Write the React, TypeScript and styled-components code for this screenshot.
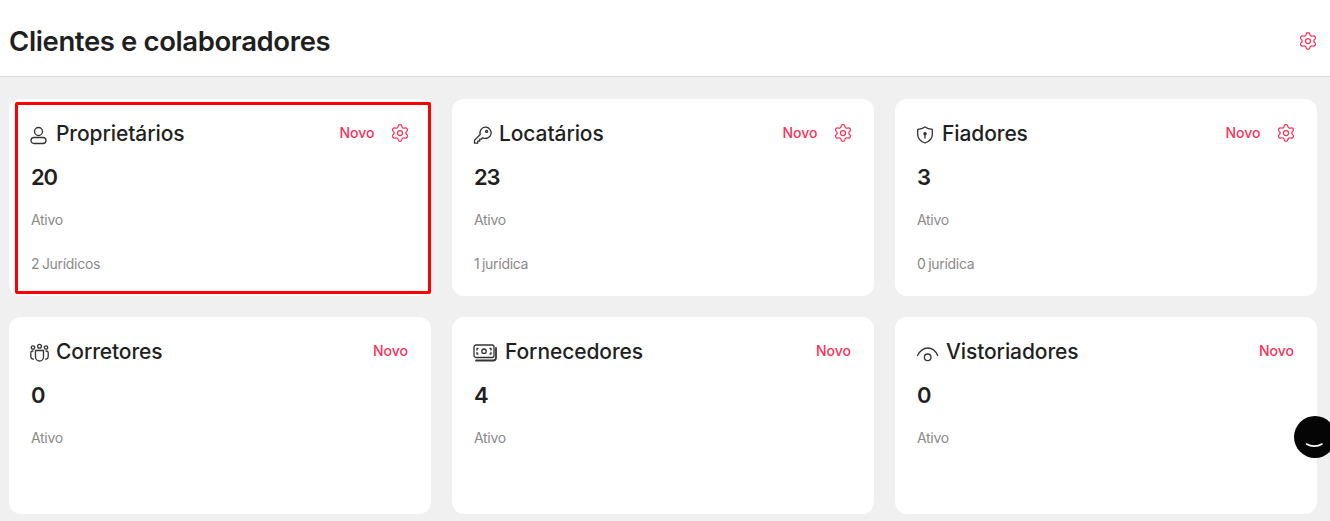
import React from "react";
import styled, { createGlobalStyle } from "styled-components";
import { Settings } from "lucide-react";

const GlobalStyle = createGlobalStyle`
  html, body {
    margin: 0;
    padding: 0;
    height: 100%;
    overflow: hidden;
    background: #f0f0f0;
    font-family: Inter, "Noto Sans", sans-serif;
  }
`;

const Page = styled.div`
  height: 521px;
  overflow: hidden;
`;

const Header = styled.header`
  background: #fff;
  border-bottom: 1px solid #d8d8d8;
  display: flex;
  align-items: center;
  justify-content: space-between;
  padding: 5px 12px 0 9px;
  height: 71px;
`;

const Title = styled.h1`
  margin: 0;
  font-size: 27.5px;
  font-weight: 600;
  letter-spacing: -0.38px;
  color: #1f1f1f;
`;

const Grid = styled.main`
  display: grid;
  grid-template-columns: repeat(3, 1fr);
  grid-auto-rows: 197px;
  gap: 21px;
  padding: 22px 13px 0 9px;
`;

const Card = styled.section`
  position: relative;
  background: #fff;
  border-radius: 12px;
  padding: 22px 22px 0 22px;
`;

const Highlight = styled.div`
  position: absolute;
  left: 6px;
  top: 3px;
  right: 0;
  bottom: 2px;
  border: 3px solid #ff0000;
  border-radius: 2px;
  pointer-events: none;
`;

const CardHead = styled.div`
  display: flex;
  align-items: center;
  height: 24px;
`;

const CardIcon = styled.svg`
  width: 20px;
  height: 20px;
  margin-left: -1px;
  margin-top: 3px;
  margin-right: 6px;
  flex: none;
  fill: none;
  stroke: #333;
  stroke-width: 1.3;
  stroke-linecap: round;
  stroke-linejoin: round;
`;

const CardTitle = styled.h2`
  margin: 0;
  flex: 1;
  font-size: 21px;
  font-weight: 500;
  letter-spacing: -0.1px;
  color: #1f1f1f;
`;

const NewLink = styled.a`
  margin-top: -1px;
  margin-right: 1px;
  font-size: 14px;
  font-weight: 500;
  color: #f8335a;
  cursor: pointer;
`;

const GearButton = styled.button`
  display: flex;
  border: 0;
  padding: 0;
  background: none;
  color: #f8335a;
  cursor: pointer;
  width: 20px;
  height: 20px;
`;

const CardGear = styled(GearButton)`
  margin-left: 14px;
  margin-right: -0.5px;
`;

const Count = styled.div`
  margin-top: 19px;
  font-size: 22px;
  line-height: 26px;
  font-weight: 600;
  letter-spacing: -1.2px;
  color: #1f1f1f;
`;

const Note = styled.div`
  margin-top: 21px;
  font-size: 14px;
  line-height: 18px;
  letter-spacing: -0.3px;
  word-spacing: -1px;
  color: #8a8a8a;
`;

const NoteSpaced = styled(Note)`
  margin-top: 26px;
`;

const ChatBubble = styled.button`
  position: fixed;
  left: 1294px;
  top: 416px;
  width: 42px;
  height: 42px;
  border: 0;
  padding: 0;
  border-radius: 50%;
  background: #050505;
  display: flex;
`;

const WideIcon = styled(CardIcon)<{ $gap: number }>`
  width: 24px;
  margin-right: ${(p) => p.$gap}px;
`;

const Owner = () => (
  <CardIcon viewBox="0 0 20 20">
    <circle cx="8.500" cy="6.500" r="4" />
    <rect x="1" y="12.500" width="15" height="6" rx="3" />
  </CardIcon>
);

const KeyIcon = () => (
  <CardIcon viewBox="0 0 20 20">
    <path d="M7.200 9.500 1.500 15.200v3h3.200v-2h2v-2h1.600l1.500-1.500a5.600 5.600 0 1 0-2.600-3.200Z" />
    <circle cx="13.600" cy="6.400" r="1" />
  </CardIcon>
);

const ShieldIcon = () => (
  <CardIcon viewBox="0 0 20 20">
    <path d="M9 2c2 1.400 4.400 2.100 7.300 2.300v5.200c0 4-2.900 6.900-7.300 8.500-4.400-1.600-7.300-4.500-7.300-8.500V4.300C4.600 4.100 7 3.400 9 2Z" />
    <circle cx="9" cy="8.700" r="1.100" fill="#333" />
    <path d="M9 9.500V13" />
  </CardIcon>
);

const TeamIcon = () => (
  <CardIcon viewBox="0 0 20 20" strokeWidth="1">
    <circle cx="3" cy="4.500" r="1.700" />
    <circle cx="9.500" cy="3.300" r="1.900" />
    <circle cx="16" cy="4.500" r="1.700" />
    <path d="M5.500 7.500h8v6.500a4 4 0 0 1-8 0Z" />
    <path d="M3 8h-.5A1.800 1.800 0 0 0 .8 9.800v3.400c0 1.600 1 2.800 2.600 3" />
    <path d="M16 8h.5a1.800 1.800 0 0 1 1.700 1.800v3.400c0 1.600-1 2.800-2.600 3" />
  </CardIcon>
);

const MoneyIcon = () => (
  <WideIcon viewBox="0 0 24 20" $gap={8}>
    <rect x="1" y="2" width="20" height="12.500" rx="2" />
    <circle cx="11" cy="8.200" r="2.200" />
    <path d="M5 5.500H4v1.500M17 5.500h1V7M5 11h-1V9.500M17 11h1V9.500" />
    <path d="M23 5v9.500a3 3 0 0 1-3 3H3" strokeWidth="1.800" />
  </WideIcon>
);

const EyeIcon = () => (
  <WideIcon viewBox="0 0 24 20" strokeWidth="1.800" $gap={6}>
    <path d="M1.500 12.500C4.500 7 8 5 11.700 5s7.500 2 10 7.500" />
    <circle cx="11.700" cy="14.300" r="3.300" />
  </WideIcon>
);

type Item = {
  title: string;
  icon: React.ReactNode;
  count: number;
  legal?: string;
  gear?: boolean;
  marked?: boolean;
};

const items: Item[] = [
  { title: "Proprietários", icon: <Owner />, count: 20, legal: "2 Jurídicos", gear: true, marked: true },
  { title: "Locatários", icon: <KeyIcon />, count: 23, legal: "1 jurídica", gear: true },
  { title: "Fiadores", icon: <ShieldIcon />, count: 3, legal: "0 jurídica", gear: true },
  { title: "Corretores", icon: <TeamIcon />, count: 0 },
  { title: "Fornecedores", icon: <MoneyIcon />, count: 4 },
  { title: "Vistoriadores", icon: <EyeIcon />, count: 0 },
];

export default function App() {
  return (
    <Page>
      <GlobalStyle />
      <Header>
        <Title>Clientes e colaboradores</Title>
        <GearButton>
          <Settings size={20} strokeWidth={1.5} />
        </GearButton>
      </Header>
      <Grid>
        {items.map((item) => (
          <Card key={item.title}>
            <CardHead>
              {item.icon}
              <CardTitle>{item.title}</CardTitle>
              <NewLink>Novo</NewLink>
              {item.gear && (
                <CardGear>
                  <Settings size={20} strokeWidth={1.5} />
                </CardGear>
              )}
            </CardHead>
            <Count>{item.count}</Count>
            <Note>Ativo</Note>
            {item.legal && <NoteSpaced>{item.legal}</NoteSpaced>}
            {item.marked && <Highlight />}
          </Card>
        ))}
      </Grid>
      <ChatBubble aria-label="Chat">
        <svg width="42" height="42" viewBox="0 0 42 42" fill="none">
          <path d="M12.500 28c4.500 2.800 11 2.800 15.500 0" stroke="#fff" strokeWidth="1.600" strokeLinecap="round" />
        </svg>
      </ChatBubble>
    </Page>
  );
}
